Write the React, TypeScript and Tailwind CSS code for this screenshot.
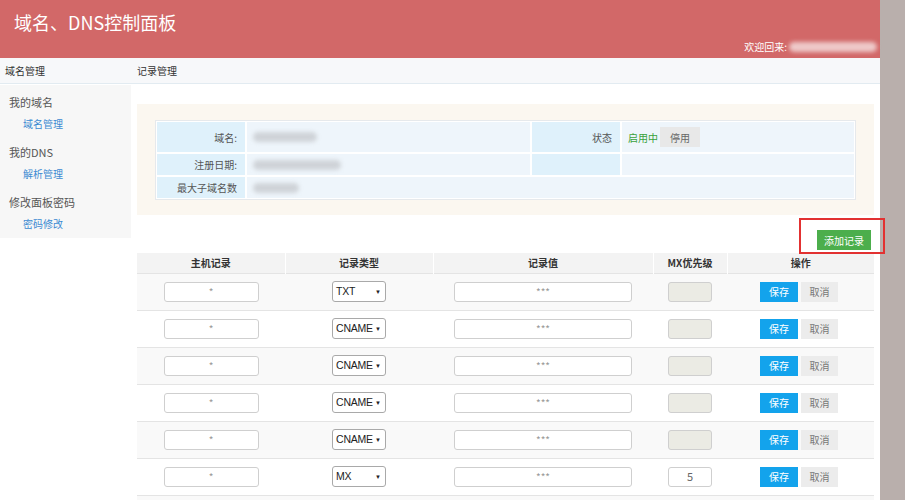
import React from 'react';

interface DnsRecord {
  host: string;
  type: string;
  value: string;
  mx: string | null;
}

const records: DnsRecord[] = [
  { host: '*', type: 'TXT', value: '***', mx: null },
  { host: '*', type: 'CNAME', value: '***', mx: null },
  { host: '*', type: 'CNAME', value: '***', mx: null },
  { host: '*', type: 'CNAME', value: '***', mx: null },
  { host: '*', type: 'CNAME', value: '***', mx: null },
  { host: '*', type: 'MX', value: '***', mx: '5' },
];

const font = { fontFamily: '"Noto Sans CJK SC", "Liberation Sans", sans-serif' };

function Blur({ w }: { w: number }) {
  return <div className="h-[10px] rounded-full bg-[#cfd3d8] blur-[2px]" style={{ width: w }} />;
}

export default function App() {
  return (
    <div className="flex w-[905px] h-[500px] overflow-hidden bg-white text-[#444]" style={font}>
      <div className="w-[880px] flex flex-col">
        {/* Header */}
        <div className="relative h-[58px] bg-[#d26868] shrink-0">
          <div className="pl-[14px] pt-[9px] text-[18px] leading-[26px] text-white">域名、DNS控制面板</div>
          <div className="absolute right-[3px] bottom-[4px] flex items-center">
            <span className="text-[10px] text-white">欢迎回来:</span>
            <div className="ml-[2px] w-[88px] h-[10px] rounded-full bg-[#eec9c9] blur-[2px]" />
          </div>
        </div>

        {/* Nav */}
        <div className="flex items-center h-[26px] bg-[#f7f8fa] border-b border-[#e2ebf1] text-[10px] text-[#333] shrink-0">
          <div className="w-[131px] pl-[5px]">域名管理</div>
          <div className="pl-[6px]">记录管理</div>
        </div>

        <div className="flex">
          {/* Sidebar */}
          <div className="w-[131px] h-[153px] mt-[1px] bg-[#f7f7f7] pl-[9px] pt-[10px] shrink-0">
            <div className="text-[11px] leading-[14px] text-[#555]">我的域名</div>
            <div className="mt-[8px] pl-[14px] text-[10px] leading-[14px] text-[#3b8ad2]">域名管理</div>
            <div className="mt-[14px] text-[11px] leading-[14px] text-[#555]">我的DNS</div>
            <div className="mt-[8px] pl-[14px] text-[10px] leading-[14px] text-[#3b8ad2]">解析管理</div>
            <div className="mt-[14px] text-[11px] leading-[14px] text-[#555]">修改面板密码</div>
            <div className="mt-[8px] pl-[14px] text-[10px] leading-[14px] text-[#3b8ad2]">密码修改</div>
          </div>

          {/* Main */}
          <div className="w-[737px] ml-[6px] pt-[20px]">
            <div className="h-[111px] bg-[#fbf7f0] px-[18px] pt-[16px]">
              <div className="border border-[#e6e9ec] bg-white p-[1px] text-[10px] text-[#555]">
                <div className="grid grid-cols-[88px_283px_88px_1fr] gap-[2px]">
                  <div className="h-[30px] bg-[#dff1fb] flex items-center justify-end pr-[8px]">域名:</div>
                  <div className="h-[30px] bg-[#eef5fb] flex items-center pl-[6px]"><Blur w={64} /></div>
                  <div className="h-[30px] bg-[#dff1fb] flex items-center justify-end pr-[8px]">状态</div>
                  <div className="h-[30px] bg-[#eef5fb] flex items-center pl-[6px]">
                    <span className="text-[#3aa13a]">启用中</span>
                    <span className="ml-[2px] h-[20px] px-[10px] flex items-center bg-[#e8e8e8] text-[#666]">停用</span>
                  </div>
                  <div className="h-[21px] bg-[#dff1fb] flex items-center justify-end pr-[8px]">注册日期:</div>
                  <div className="h-[21px] bg-[#eef5fb] flex items-center pl-[6px]"><Blur w={88} /></div>
                  <div className="h-[21px] bg-[#dff1fb]" />
                  <div className="h-[21px] bg-[#eef5fb]" />
                  <div className="h-[21px] bg-[#dff1fb] flex items-center justify-end pr-[8px]">最大子域名数</div>
                  <div className="col-span-3 h-[21px] bg-[#eef5fb] flex items-center pl-[6px]"><Blur w={46} /></div>
                </div>
              </div>
            </div>

            <div className="relative flex justify-end pt-[15px] pr-[3px] h-[38px]">
              <div className="absolute left-[662px] top-[3px] w-[86px] h-[36px] border-2 border-[#e23131]" />
              <button className="w-[54px] h-[20px] bg-[#4cae4c] text-white text-[10px]">添加记录</button>
            </div>

            {/* Records table */}
            <table className="w-full table-fixed border-collapse text-[10px]">
              <colgroup>
                <col className="w-[148px]" />
                <col className="w-[148px]" />
                <col className="w-[220px]" />
                <col className="w-[74px]" />
                <col className="w-[147px]" />
              </colgroup>
              <thead>
                <tr className="h-[20px] bg-[#f3f3f3] text-[#333] font-bold">
                  <th className="border-r border-[#fff]">主机记录</th>
                  <th className="border-r border-[#fff]">记录类型</th>
                  <th className="border-r border-[#fff]">记录值</th>
                  <th className="border-r border-[#fff]">MX优先级</th>
                  <th>操作</th>
                </tr>
              </thead>
              <tbody>
                {records.map((r, i) => (
                  <tr key={i} className={`h-[37px] border-t border-[#e4e4e4] ${i % 2 === 0 ? 'bg-[#f9f9f9]' : 'bg-white'}`}>
                    <td className="text-center">
                      <div className="mx-auto w-[95px] h-[20px] rounded-[3px] border border-[#cfcfcf] bg-white flex items-center justify-center text-[#999]">{r.host}</div>
                    </td>
                    <td>
                      <div className="mx-auto w-[54px] h-[21px] rounded-[3px] border border-[#a9a9a9] bg-white flex items-center justify-between pl-[3px] pr-[4px] text-[10.5px] text-[#222]" style={{ fontFamily: '"Liberation Sans", Arial, sans-serif' }}>
                        <span className="tracking-[-0.2px]">{r.type}</span>
                        <span className="text-[6px] leading-none">▼</span>
                      </div>
                    </td>
                    <td>
                      <div className="mx-auto w-[178px] h-[20px] rounded-[3px] border border-[#cfcfcf] bg-white flex items-center justify-center text-[#999]">{r.value}</div>
                    </td>
                    <td>
                      <div className={`mx-auto w-[44px] h-[20px] rounded-[3px] border border-[#cfcfcf] flex items-center justify-center text-[#666] text-[11px] ${r.mx ? 'bg-white' : 'bg-[#ebebe4]'}`}>{r.mx}</div>
                    </td>
                    <td>
                      <div className="flex items-center pl-[33px] gap-[3px]">
                        <button className="w-[38px] h-[20px] bg-[#13a3ec] text-white">保存</button>
                        <button className="w-[37px] h-[20px] bg-[#ececec] text-[#777]">取消</button>
                      </div>
                    </td>
                  </tr>
                ))}
                <tr className="h-[37px] border-t border-[#e4e4e4] bg-[#f9f9f9]">
                  <td colSpan={5} />
                </tr>
              </tbody>
            </table>
          </div>
        </div>
      </div>
      <div className="w-[25px] bg-[#b9afac]" />
    </div>
  );
}
